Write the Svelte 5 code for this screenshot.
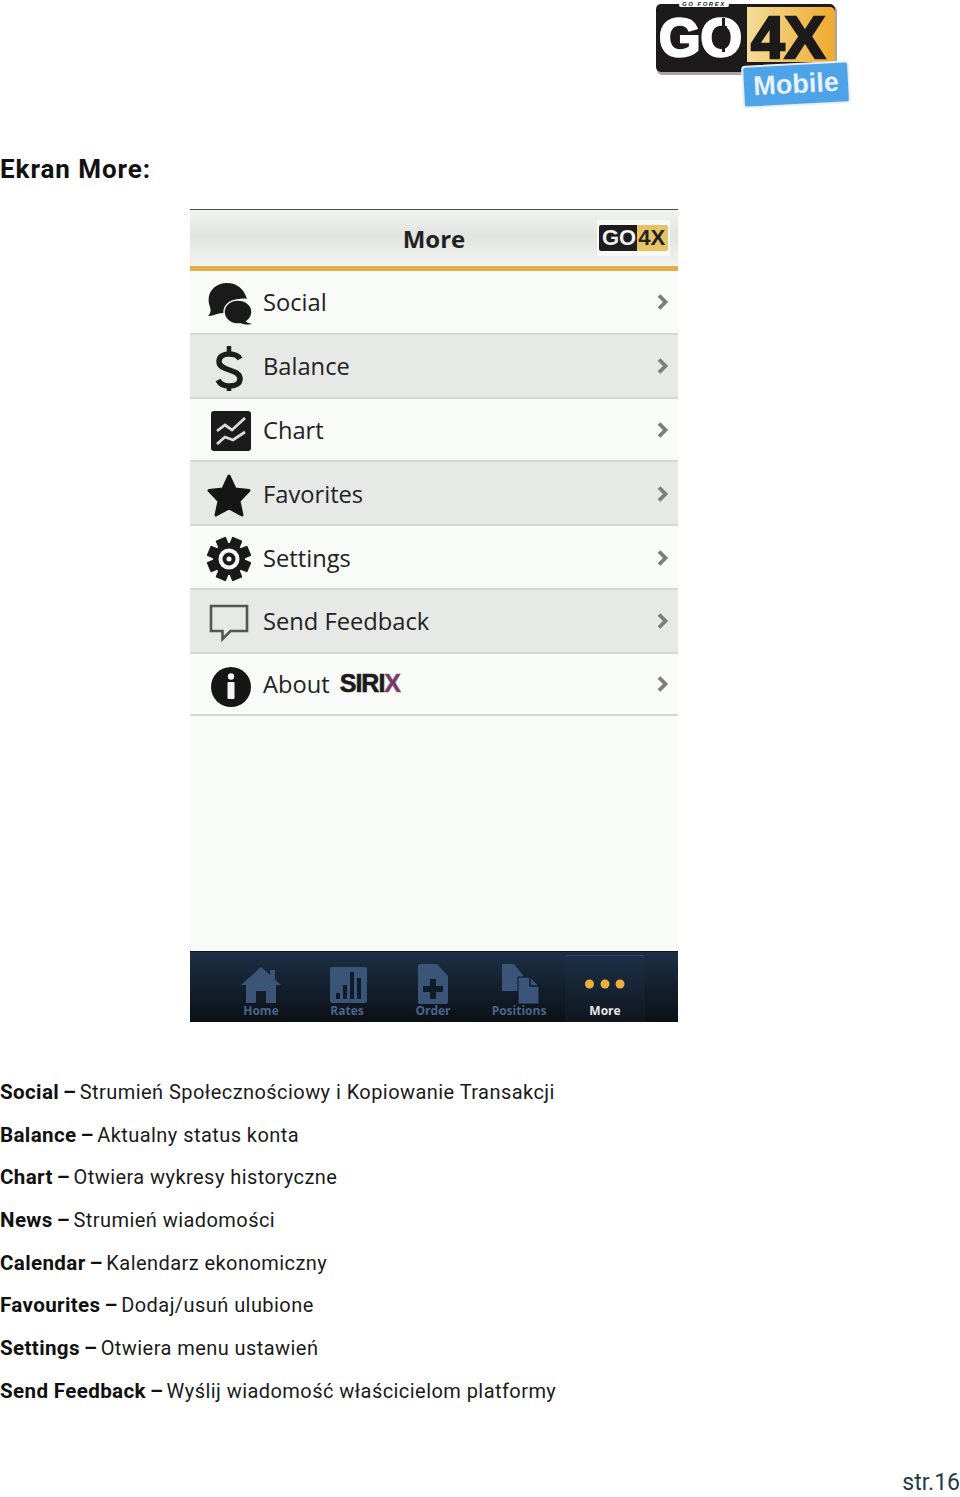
<script>
  const rows = [
    { icon: 'social', label: 'Social' },
    { icon: 'dollar', label: 'Balance' },
    { icon: 'chart', label: 'Chart' },
    { icon: 'star', label: 'Favorites' },
    { icon: 'gear', label: 'Settings' },
    { icon: 'feedback', label: 'Send Feedback' },
    { icon: 'info', label: 'About' }
  ]

  const tabs = [
    { icon: 'home', label: 'Home' },
    { icon: 'rates', label: 'Rates' },
    { icon: 'order', label: 'Order' },
    { icon: 'positions', label: 'Positions' },
    { icon: 'more', label: 'More', active: true }
  ]

  const notes = [
    ['Social', 'Strumień Społecznościowy i Kopiowanie Transakcji'],
    ['Balance', 'Aktualny status konta'],
    ['Chart', 'Otwiera wykresy historyczne'],
    ['News', 'Strumień wiadomości'],
    ['Calendar', 'Kalendarz ekonomiczny'],
    ['Favourites', 'Dodaj/usuń ulubione'],
    ['Settings', 'Otwiera menu ustawień'],
    ['Send Feedback', 'Wyślij wiadomość właścicielom platformy']
  ]

  // teeth of the settings gear, one rect per 45 degrees
  const teeth = [0, 45, 90, 135, 180, 225, 270, 315]
</script>

<div class="page">
  <header class="brand">
    <svg class="brand-logo" viewBox="0 0 200 108" width="200" height="108">
      <defs>
        <linearGradient id="gold" x1="0" y1="0" x2="1" y2="0">
          <stop offset="0" stop-color="#f3dc9a" />
          <stop offset="1" stop-color="#eeaa2c" />
        </linearGradient>
      </defs>
      <rect x="3" y="6" width="180" height="69" rx="5" fill="#a5a5a5" />
      <rect x="2" y="4" width="179" height="68" rx="5" fill="#1c1a1b" />
      <path d="M93 7h83a5 5 0 0 1 5 5v50H93z" fill="url(#gold)" />
      <rect x="25" y="0" width="50" height="7" rx="2" fill="#fff" />
      <text x="28" y="6" class="go-forex">GO FOREX</text>
      <text x="5" y="56" class="go" textLength="83" lengthAdjust="spacingAndGlyphs">GO</text>
      <path d="M68 18h3v8h2v18h-2v8h-3v-8h-2V26h2z" fill="#1c1a1b" />
      <text x="97" y="58" class="fourx" textLength="74" lengthAdjust="spacingAndGlyphs">4X</text>
      <g transform="rotate(-3 142 84)">
        <rect x="89" y="64" width="106" height="41" rx="3" fill="#4da3e8" stroke="#e9eef2" stroke-width="2" />
        <text x="142" y="93" text-anchor="middle" class="mobile">Mobile</text>
      </g>
    </svg>
  </header>

  <h1>Ekran More:</h1>

  <section class="phone">
    <div class="titlebar">
      <span class="title">More</span>
      <div class="mini-logo">
        <span class="mini-go">GO</span><span class="mini-4x">4X</span>
      </div>
    </div>

    <ul class="menu">
      {#each rows as row, i}
        <li class:alt={i % 2 === 1}>
          <span class="row-icon">
            <svg viewBox="0 0 46 46" width="46" height="46">
              {#if row.icon === 'social'}
                <path d="M2 35c3-3 3-6 2-9C-1 13 8 2 21 2c10 0 17 6 20 16-10-2-20 4-19 14-6 0-8 0-11 1-3 1-6 2-9 2z" fill="#1a1a1a" />
                <ellipse cx="32" cy="31" rx="14" ry="12" fill="#1a1a1a" stroke="#f8fbf8" stroke-width="1.500" />
                <path d="M38 39c2 2 4 3 8 4-4 1-9 1-13-2z" fill="#1a1a1a" />
              {:else if row.icon === 'dollar'}
                <path d="M34 15c-2-4-6-5-11-5-6 0-10 3-10 7.500C13 28 34 24 34 35c0 5-5 7-11 7-5 0-9-2-11-6" fill="none" stroke="#1d1d1d" stroke-width="5.500" transform="translate(0 -1)" />
                <path d="M23 1v8M23 40v6" stroke="#1d1d1d" stroke-width="4.500" />
              {:else if row.icon === 'chart'}
                <rect x="5" y="3" width="40" height="40" rx="3" fill="#1b1b1b" />
                <path d="M11 23l8-6 7 5 13-12M11 36l8-7 8 3 12-8" fill="none" stroke="#dcdcdc" stroke-width="2.800" />
              {:else if row.icon === 'star'}
                <path d="M23 4l6 13 14 1.500-10 10.500 3 14-13-7-13 7 3-14L3 18.500 17 17z" fill="#151515" stroke="#151515" stroke-linejoin="round" stroke-width="3" />
              {:else if row.icon === 'gear'}
                {#each teeth as deg}
                  <rect x="17.500" y="1" width="11" height="9" rx="1" fill="#1a1a1a" transform="rotate({deg + 22.500} 23 23)" />
                {/each}
                <circle cx="23" cy="23" r="16" fill="#1a1a1a" />
                <circle cx="23" cy="23" r="10.500" fill="#f8fbf8" />
                <circle cx="23" cy="23" r="6.500" fill="#1a1a1a" />
                <circle cx="23" cy="23" r="2.500" fill="#f8fbf8" />
              {:else if row.icon === 'feedback'}
                <path d="M5 6h36v25H24.500l-8 8v-8H5z" fill="none" stroke="#555" stroke-width="2.600" />
              {:else if row.icon === 'info'}
                <circle cx="25" cy="24" r="20" fill="#161616" />
                <circle cx="25" cy="13.500" r="3.200" fill="#f4f4f4" />
                <rect x="21.500" y="19" width="7" height="17" rx="1" fill="#f4f4f4" />
              {/if}
            </svg>
          </span>
          <span class="row-label">{row.label}</span>
          {#if row.icon === 'info'}
            <span class="sirix">SIRI<span class="sirix-x">X</span></span>
          {/if}
          <svg class="chevron" viewBox="0 0 12 18" width="12" height="18">
            <path d="M2 2.500L8.500 9 2 15.500" fill="none" stroke="#7b7e7c" stroke-width="3.800" />
          </svg>
        </li>
      {/each}
    </ul>

    <nav class="tabbar">
      {#each tabs as tab}
        <div class="tab" class:active={tab.active}>
          <svg viewBox="0 0 44 40" width="44" height="40">
            {#if tab.icon === 'home'}
              <path d="M22 3L2 21h5v18h10V27h10v12h10V21h5l-6-5.500V6h-5v5z" fill="#3a5578" />
            {:else if tab.icon === 'rates'}
              <rect x="5" y="3" width="37" height="36" rx="2" fill="#3a5578" />
              <path d="M11 29h4v6h-4zM18 21h4v14h-4zM25 8h4v27h-4zM32 14h4v21h-4z" fill="#101c2a" />
            {:else if tab.icon === 'order'}
              <path d="M9 0h17l11 12v26a2 2 0 0 1-2 2H9a2 2 0 0 1-2-2V2a2 2 0 0 1 2-2z" fill="#3a5578" />
              <path d="M19 15h6v7h7v6h-7v7h-6v-7h-7v-6h7z" fill="#101c2a" />
            {:else if tab.icon === 'positions'}
              <path d="M5 0h12l9 11v16H5z" fill="#3a5578" />
              <path d="M21 13h12l9 9v18H21z" fill="#3a5578" stroke="#0f1a28" stroke-width="1" />
              <path d="M33 13v9h9" fill="none" stroke="#0f1a28" stroke-width="1.500" />
            {:else}
              <circle cx="6.500" cy="20" r="4.500" fill="#e9b03c" />
              <circle cx="22" cy="20" r="4.500" fill="#e9b03c" />
              <circle cx="37" cy="20" r="4.500" fill="#e9b03c" />
            {/if}
          </svg>
          <span class="tab-label">{tab.label}</span>
        </div>
      {/each}
    </nav>
  </section>

  <ul class="notes">
    {#each notes as [name, text]}
      <li><b>{name}<span class="dash">–</span></b> {text}</li>
    {/each}
  </ul>

  <footer>str.16</footer>
</div>

<style>
  :global(body) {
    margin: 0;
    background: #fff;
  }
  .page {
    width: 960px;
    height: 1497px;
    overflow: hidden;
    font-family: Roboto, "Liberation Sans", sans-serif;
    color: #111;
  }
  .brand {
    height: 108px;
    display: flex;
    padding-left: 654px;
  }
  .brand-logo {
    display: block;
  }
  .go-forex {
    font: italic 700 6px "Liberation Sans", sans-serif;
    letter-spacing: 1.500px;
    fill: #1c1a1b;
  }
  .go {
    font: 900 54px "Liberation Sans", sans-serif;
    fill: #fff;
    stroke: #fff;
    stroke-width: 2.500px;
  }
  .fourx {
    font: 900 60px "Liberation Sans", sans-serif;
    fill: #1c1a1b;
    stroke: #1c1a1b;
    stroke-width: 2.500px;
  }
  .mobile {
    font: 700 27px "Liberation Sans", sans-serif;
    fill: #e8f1f8;
  }
  h1 {
    margin: 0;
    padding-top: 46px;
    height: 55px;
    font-size: 26px;
    line-height: 30px;
    font-weight: 700;
    letter-spacing: 0.95px;
    color: #111;
  }
  .phone {
    margin-left: 190px;
    width: 488px;
    height: 813px;
    display: flex;
    flex-direction: column;
    background: #f8fbf8;
    font-family: "Open Sans", "Noto Sans", sans-serif;
  }
  .titlebar {
    height: 56px;
    flex: none;
    border-top: 1px solid #4c4c4c;
    border-bottom: 5px solid #e2ae4c;
    background: linear-gradient(#f1f3ef, #e2e4e1 45%, #f1f3ef);
    display: flex;
    align-items: center;
    justify-content: center;
    position: relative;
  }
  .title {
    font-size: 24px;
    font-weight: 700;
    color: #222;
    padding-top: 1px;
  }
  .mini-logo {
    position: absolute;
    right: 8px;
    top: 10px;
    width: 73px;
    height: 36px;
    background: #f8f8f6;
    display: flex;
    align-items: center;
    justify-content: center;
    font: 900 22px/26px "Liberation Sans", sans-serif;
  }
  .mini-go {
    background: #1e1c1c;
    color: #f2f2f2;
    padding: 0 1px 0 3px;
    border-radius: 2px 0 0 2px;
  }
  .mini-4x {
    background: #e5c365;
    color: #222;
    padding: 0 3px 0 1px;
    border-radius: 0 2px 2px 0;
  }
  .menu {
    list-style: none;
    margin: 0;
    padding: 0;
    flex: 1;
  }
  .menu li {
    height: 61.8px;
    border-bottom: 2px solid #d5d8d5;
    display: flex;
    align-items: center;
    padding: 0 9px 0 16px;
    font-size: 23.7px;
    color: #222;
  }
  .menu li:last-child {
    height: 60px;
  }
  .menu li.alt {
    background: #e6e9e6;
  }
  .row-icon {
    width: 46px;
    height: 46px;
    flex: none;
    margin: 4px 11px 0 0;
  }
  .row-icon svg {
    display: block;
  }
  .row-label {
    white-space: nowrap;
    padding-top: 1px;
  }
  .sirix {
    margin-left: 10px;
    font: 900 25px "Liberation Sans", sans-serif;
    letter-spacing: -1px;
    color: #1b1b1e;
    -webkit-text-stroke: 0.6px #1b1b1e;
  }
  .sirix-x {
    color: #6a3b78;
    -webkit-text-stroke: 0.6px #a04a50;
  }
  .chevron {
    margin-left: auto;
    padding-top: 1px;
  }
  .tabbar {
    height: 71px;
    flex: none;
    padding-left: 28px;
    display: flex;
    background: linear-gradient(#1c2f45, #0c1016);
    border-top: 1px solid #0c1520;
    box-sizing: border-box;
  }
  .tab {
    width: 86px;
    padding-top: 12px;
    box-sizing: border-box;
    display: flex;
    flex-direction: column;
    align-items: center;
    color: #4a6589;
  }
  .tab svg {
    display: block;
  }
  .tab.active {
    width: 80px;
    margin: 3px 3px 0;
    color: #e8e8e8;
    background: linear-gradient(#1c3046, #10161f);
    border-top: 1px solid #33475e;
    padding-top: 8px;
    border-radius: 3px 3px 0 0;
  }
  .tab-label {
    font-size: 12px;
    line-height: 14px;
    font-weight: 700;
    white-space: nowrap;
  }
  .notes {
    list-style: none;
    margin: 49px 0 0;
    padding: 0;
  }
  .notes li {
    height: 42.670px;
    line-height: 42.670px;
    font-size: 20px;
    letter-spacing: 0.44px;
    color: #1a1a1a;
    white-space: nowrap;
  }
  .notes b {
    font-size: 20.6px;
    font-weight: 700;
    letter-spacing: 0.35px;
    margin-right: -2px;
    color: #111;
  }
  .dash {
    margin-left: 4px;
  }
  footer {
    text-align: right;
    margin-top: 56px;
    font-size: 23px;
    line-height: 30px;
    color: #1f3a50;
  }
</style>
